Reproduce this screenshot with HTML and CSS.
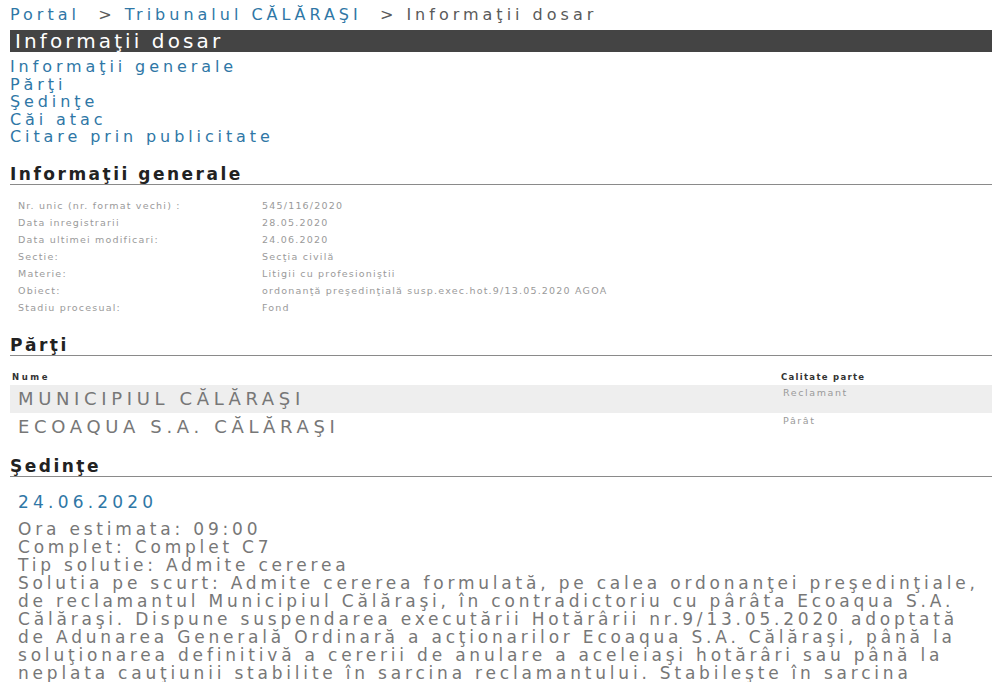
FILE: index.html
```html
<!DOCTYPE html>
<html lang="ro">
<head>
<meta charset="utf-8">
<title>Informaţii dosar</title>
<link rel="stylesheet" href="styles.css">
</head>
<body>
<div class="page">
  <div class="crumb"><a class="crumb-link" href="#">Portal</a>&nbsp; &gt; <a class="crumb-link" href="#">Tribunalul CĂLĂRAŞI</a>&nbsp; &gt; Informaţii dosar</div>
  <div class="bar">Informaţii dosar</div>
  <nav class="links">
    <a href="#">Informaţii generale</a>
    <a href="#">Părţi</a>
    <a href="#">Şedinţe</a>
    <a href="#">Căi atac</a>
    <a href="#">Citare prin publicitate</a>
  </nav>

  <h2 class="heading h-general">Informaţii generale</h2>
  <div class="info">
    <div class="info-label">Nr. unic (nr. format vechi) :</div><div class="info-value">545/116/2020</div>
    <div class="info-label">Data inregistrarii</div><div class="info-value">28.05.2020</div>
    <div class="info-label">Data ultimei modificari:</div><div class="info-value">24.06.2020</div>
    <div class="info-label">Sectie:</div><div class="info-value">Secţia civilă</div>
    <div class="info-label">Materie:</div><div class="info-value">Litigii cu profesioniştii</div>
    <div class="info-label">Obiect:</div><div class="info-value">ordonanţă preşedinţială susp.exec.hot.9/13.05.2020 AGOA</div>
    <div class="info-label">Stadiu procesual:</div><div class="info-value">Fond</div>
  </div>

  <h2 class="heading h-parti">Părţi</h2>
  <div class="parties">
    <div class="p-head">
      <div class="p-name-h">Nume</div>
      <div class="p-role-h">Calitate parte</div>
    </div>
    <div class="p-row p-row-alt">
      <div class="p-name">MUNICIPIUL CĂLĂRAŞI</div>
      <div class="p-role">Reclamant</div>
    </div>
    <div class="p-row">
      <div class="p-name">ECOAQUA S.A. CĂLĂRAŞI</div>
      <div class="p-role">Pârât</div>
    </div>
  </div>

  <h2 class="heading h-sedinte">Şedinţe</h2>
  <div class="session">
    <div class="s-date">24.06.2020</div>
    <p class="s-text">Ora estimata: 09:00<br>Complet: Complet C7<br>Tip solutie: Admite cererea<br>Solutia pe scurt: Admite cererea formulată, pe calea ordonanţei preşedinţiale,<br>de reclamantul Municipiul Călăraşi, în contradictoriu cu pârâta Ecoaqua S.A.<br>Călăraşi. Dispune suspendarea executării Hotărârii nr.9/13.05.2020 adoptată<br>de Adunarea Generală Ordinară a acţionarilor Ecoaqua S.A. Călăraşi, până la<br>soluţionarea definitivă a cererii de anulare a aceleiaşi hotărâri sau până la<br>neplata cauţiunii stabilite în sarcina reclamantului. Stabileşte în sarcina</p>
  </div>
</div>
</body>
</html>
```

FILE: styles.css
```css
html, body {
  margin: 0;
  padding: 0;
  background: #ffffff;
}

body {
  font-family: "DejaVu Sans", "Noto Sans", sans-serif;
  color: #777777;
}

.page {
  padding: 4px 8px 0 10px;
  display: flex;
  flex-direction: column;
  overflow: hidden;
}

a {
  text-decoration: none;
}

.crumb {
  font-size: 16px;
  line-height: 22px;
  letter-spacing: 4px;
  color: #5a5a5a;
  white-space: nowrap;
}

.crumb-link {
  color: #2f77a6;
}

.bar {
  margin-top: 4px;
  height: 22px;
  line-height: 22px;
  background: #444444;
  color: #ffffff;
  font-size: 20px;
  letter-spacing: 3.1px;
  padding-left: 5px;
  white-space: nowrap;
}

.links {
  display: flex;
  flex-direction: column;
  margin-top: 6px;
}

.links a {
  color: #2f77a6;
  font-size: 16px;
  line-height: 17.5px;
  letter-spacing: 3.9px;
  white-space: nowrap;
}

.heading {
  margin: 0;
  font-size: 17px;
  font-weight: bold;
  line-height: 20px;
  letter-spacing: 2.5px;
  color: #222222;
  border-bottom: 1.5px solid #8a8a8a;
}

.h-general {
  margin-top: 18.5px;
}

.h-parti {
  margin-top: 19.5px;
}

.h-sedinte {
  margin-top: 15.5px;
}

.info {
  display: grid;
  grid-template-columns: 244px 1fr;
  padding-left: 8px;
  margin-top: 11.5px;
  font-size: 9.5px;
  line-height: 17px;
  letter-spacing: 1.2px;
  color: #9a9a9a;
  white-space: nowrap;
}

.parties {
  display: flex;
  flex-direction: column;
}

.p-head {
  display: flex;
  padding: 15px 0 2px 2px;
  font-size: 8.5px;
  font-weight: bold;
  line-height: 12px;
  letter-spacing: 1.6px;
  color: #333333;
}

.p-name-h {
  width: 769px;
  letter-spacing: 2.6px;
}

.p-role-h {
  letter-spacing: 1.3px;
}

.p-row {
  display: flex;
  height: 27.5px;
}

.p-row-alt {
  background: #eeeeee;
}

.p-name {
  width: 765px;
  padding-left: 8px;
  font-size: 18px;
  line-height: 27.5px;
  letter-spacing: 4.65px;
  color: #777777;
  white-space: nowrap;
}

.p-role {
  padding-top: 2px;
  font-size: 9.5px;
  line-height: 12px;
  letter-spacing: 1.6px;
  color: #9a9a9a;
}

.session {
  display: flex;
  flex-direction: column;
  padding-left: 8px;
}

.s-date {
  margin-top: 14.5px;
  font-size: 17px;
  line-height: 22px;
  letter-spacing: 4.2px;
  color: #2f77a6;
}

.s-text {
  margin: 6.5px 0 0 0;
  font-size: 17px;
  line-height: 18px;
  letter-spacing: 3.8px;
  color: #777777;
  white-space: nowrap;
}
```
